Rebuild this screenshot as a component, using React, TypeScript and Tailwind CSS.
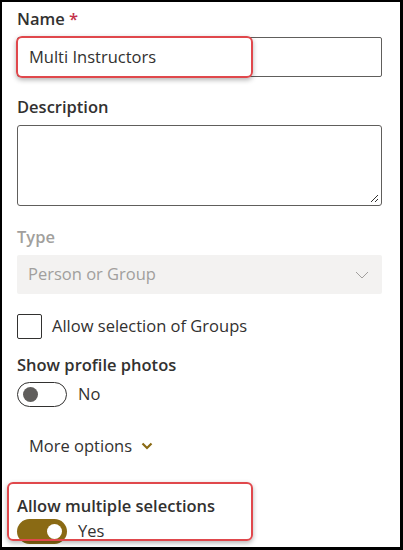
import React from "react";

const font = { fontFamily: '"Segoe UI", "Open Sans", "Noto Sans", sans-serif' };

function Label({ children, gray }: { children: React.ReactNode; gray?: boolean }) {
  return (
    <div className={`text-[16.5px] leading-[22px] font-semibold ${gray ? "text-[#a19f9d]" : "text-[#323130]"}`}>
      {children}
    </div>
  );
}

export default function App() {
  return (
    <div
      className="w-[403px] h-[550px] bg-white border-l-2 border-t-2 border-r-[3px] border-b-[3px] border-black overflow-hidden"
      style={font}
    >
      <div className="pl-[15px] pr-[18px] pt-[6px]">
        <Label>
          Name <span className="text-[#c4314b]">*</span>
        </Label>
        <div className="relative mt-[7px]">
          <div className="h-[40px] border border-[#605e5c] rounded-[2px] flex items-center pl-[11px] text-[16.5px] text-[#323130]">
            Multi Instructors
          </div>
          <div className="absolute left-[-1px] top-[-1px] w-[237px] h-[42px] border-2 border-[#e0484c] rounded-[6px] shadow-[0_2px_5px_rgba(0,0,0,0.3)]" />
        </div>

        <div className="mt-[19px]">
          <Label>Description</Label>
        </div>
        <div className="relative mt-[7px] h-[81px] border border-[#605e5c] rounded-[3px]">
          <svg className="absolute right-[2px] bottom-[2px]" width="9" height="9" viewBox="0 0 9 9">
            <line x1="1" y1="8" x2="8" y2="1" stroke="#323130" strokeWidth="1" />
            <line x1="5" y1="8" x2="8" y2="5" stroke="#323130" strokeWidth="1" />
          </svg>
        </div>

        <div className="mt-[20px]">
          <Label gray>Type</Label>
        </div>
        <div className="mt-[7px] h-[39px] bg-[#f3f2f1] rounded-[2px] flex items-center justify-between pl-[11px] pr-[13px] text-[16.5px] text-[#a19f9d]">
          <span>Person or Group</span>
          <svg width="14" height="8" viewBox="0 0 14 8">
            <polyline points="1,1 7,7 13,1" fill="none" stroke="#a19f9d" strokeWidth="1" />
          </svg>
        </div>

        <div className="mt-[20px] flex items-center gap-[10px]">
          <div className="w-[25px] h-[25px] border border-[#323130] rounded-[2px]" />
          <span className="text-[16.5px] text-[#323130]">Allow selection of Groups</span>
        </div>

        <div className="mt-[15px]">
          <Label>Show profile photos</Label>
        </div>
        <div className="mt-[6px] flex items-center gap-[11px]">
          <div className="w-[50px] h-[25px] border border-[#323130] rounded-full flex items-center pl-[5px]">
            <div className="w-[15px] h-[15px] rounded-full bg-[#605e5c]" />
          </div>
          <span className="text-[16.5px] text-[#323130]">No</span>
        </div>

        <div className="mt-[27px] pl-[12px] flex items-center gap-[9px] text-[16.5px] text-[#323130]">
          <span>More options</span>
          <svg width="12" height="8" viewBox="0 0 12 8">
            <polyline points="1.5,1.5 6,6 10.5,1.5" fill="none" stroke="#8a6a14" strokeWidth="2.2" />
          </svg>
        </div>

        <div className="relative mt-[36px]">
          <div className="absolute left-[-10px] top-[-13px] w-[246px] h-[59px] border-2 border-[#e0484c] rounded-[6px] shadow-[0_2px_5px_rgba(0,0,0,0.3)]" />
          <Label>Allow multiple selections</Label>
          <div className="mt-[2px] flex items-center gap-[11px]">
            <div className="w-[50px] h-[25px] bg-[#8a6a14] rounded-full flex items-center justify-end pr-[5px]">
              <div className="w-[15px] h-[15px] rounded-full bg-white" />
            </div>
            <span className="text-[16.5px] text-[#323130]">Yes</span>
          </div>
        </div>
      </div>
    </div>
  );
}
